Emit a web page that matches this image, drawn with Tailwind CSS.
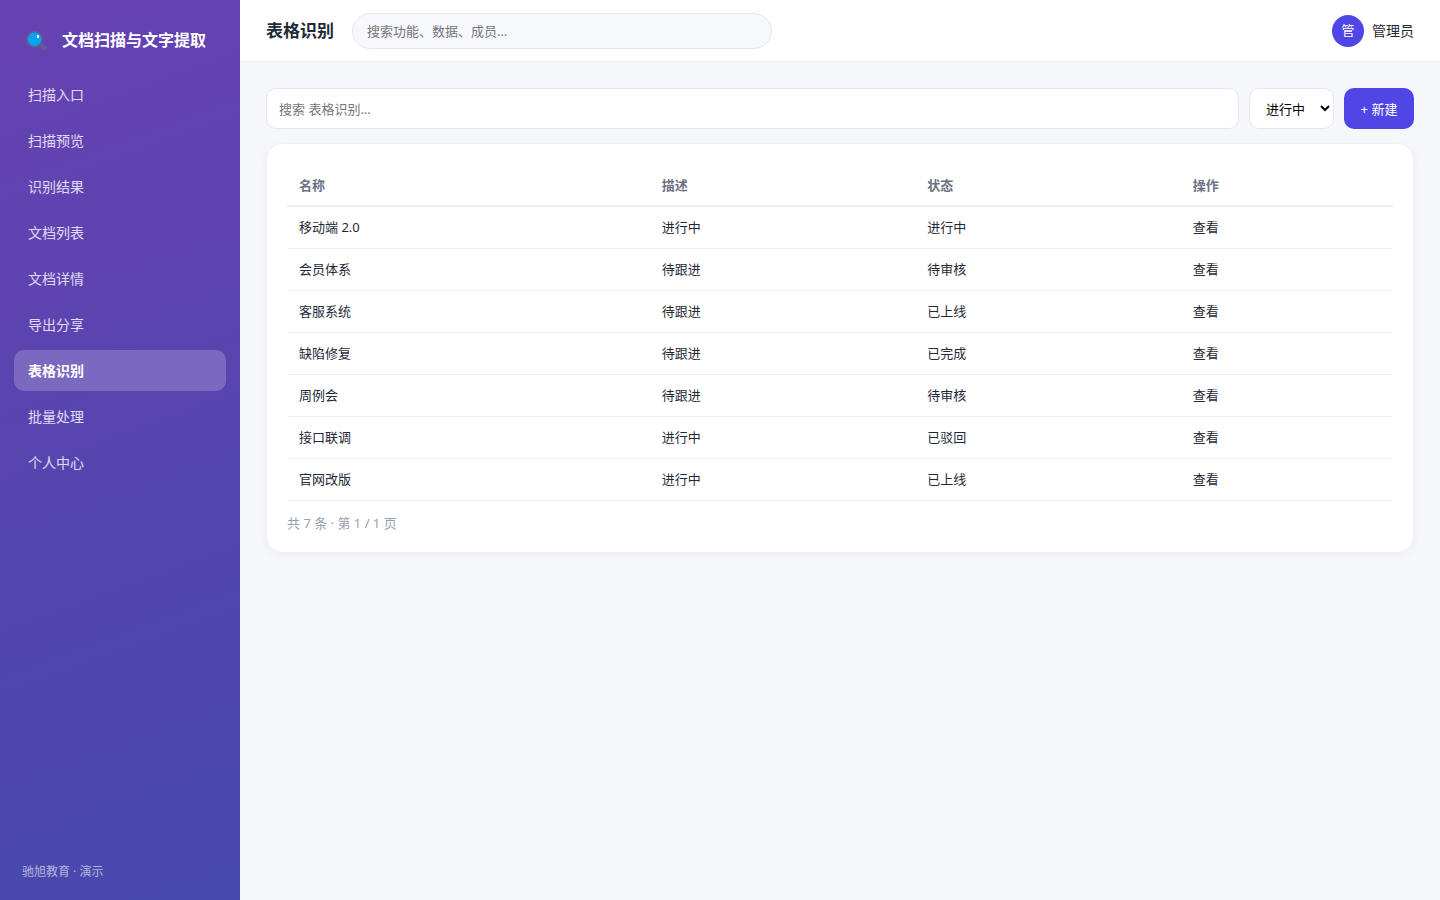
<!DOCTYPE html>
<html lang="zh-CN">
  <head>
    <meta charset="UTF-8" />
    <meta name="viewport" content="width=device-width, initial-scale=1.0" />
    <title>表格识别</title>
    <script src="https://cdn.jsdelivr.net/npm/@tailwindcss/browser@4"></script>
  </head>

  <body
    class="flex min-h-screen bg-[#f5f7fb] font-['Noto_Sans','Noto_Sans_CJK_SC',sans-serif] text-[13px] leading-5 text-[#1f2937]"
  >
    <!-- Sidebar -->
    <aside
      class="flex w-60 shrink-0 flex-col bg-linear-[160deg,#6741b2,#4749ac] text-white"
    >
      <div class="flex h-[75px] items-center gap-3 pt-1 pl-[26px] text-base font-semibold">
        <svg class="size-6" viewBox="0 0 24 24" aria-hidden="true">
          <path d="M14.5 16.5l5.4 5" stroke="#635994" stroke-width="4.8" />
          <circle cx="8.6" cy="11.2" r="7.7" fill="#00a4ef" stroke="#635994" stroke-width="1.8" />
          <rect x="11" y="7" width="2" height="3" fill="#fff" />
        </svg>
        <span class="whitespace-nowrap">文档扫描与文字提取</span>
      </div>
      <nav class="-mt-px flex flex-col gap-[5px] px-3.5 text-sm text-white/80">
        <a href="#" class="flex h-[41px] items-center rounded-[10px] px-3.5 hover:bg-white/10">扫描入口</a>
        <a href="#" class="flex h-[41px] items-center rounded-[10px] px-3.5 hover:bg-white/10">扫描预览</a>
        <a href="#" class="flex h-[41px] items-center rounded-[10px] px-3.5 hover:bg-white/10">识别结果</a>
        <a href="#" class="flex h-[41px] items-center rounded-[10px] px-3.5 hover:bg-white/10">文档列表</a>
        <a href="#" class="flex h-[41px] items-center rounded-[10px] px-3.5 hover:bg-white/10">文档详情</a>
        <a href="#" class="flex h-[41px] items-center rounded-[10px] px-3.5 hover:bg-white/10">导出分享</a>
        <a href="#" aria-current="page" class="flex h-[41px] items-center rounded-[10px] bg-white/20 px-3.5 font-semibold text-white">表格识别</a>
        <a href="#" class="flex h-[41px] items-center rounded-[10px] px-3.5 hover:bg-white/10">批量处理</a>
        <a href="#" class="flex h-[41px] items-center rounded-[10px] px-3.5 hover:bg-white/10">个人中心</a>
      </nav>
      <p class="mt-auto px-[22px] pb-[18px] text-xs leading-5 text-white/60">驰旭教育 · 演示</p>
    </aside>

    <div class="flex min-w-0 flex-1 flex-col">
      <!-- Top bar -->
      <header
        class="flex h-[62px] items-center gap-[18px] border-b border-[#eef0f4] bg-white px-[26px]"
      >
        <h1 class="text-[17px] leading-6 font-bold whitespace-nowrap">表格识别</h1>
        <input
          type="search"
          aria-label="全局搜索"
          class="h-9 w-full max-w-[420px] rounded-full border border-[#e5e7f0] bg-[#f7f8fc] px-3.5 placeholder:text-[#757575] focus:outline-none"
          placeholder="搜索功能、数据、成员…"
        />
        <div class="ml-auto flex items-center gap-2 text-sm whitespace-nowrap">
          <span class="flex size-8 items-center justify-center rounded-full bg-[#4f46e5] text-[13px] text-white">管</span>
          <span>管理员</span>
        </div>
      </header>

      <main class="p-[26px]">
        <div class="flex gap-2.5">
          <input
            type="search"
            aria-label="搜索表格识别"
            class="h-[41px] min-w-0 flex-1 rounded-[10px] border border-[#e5e7f0] bg-white px-3 placeholder:text-[#757575] focus:outline-none"
            placeholder="搜索 表格识别..."
          />
          <select
            aria-label="状态"
            class="h-[41px] w-[85px] rounded-[10px] border border-[#e5e7f0] bg-white pl-3 text-black"
          >
            <option>进行中</option>
            <option>待审核</option>
            <option>已上线</option>
            <option>已完成</option>
            <option>已驳回</option>
          </select>
          <button
            type="button"
            class="h-[41px] w-[70px] rounded-[10px] bg-[#4f46e5] text-white hover:bg-[#4338ca]"
          >
            + 新建
          </button>
        </div>

        <section
          class="mt-3.5 rounded-2xl border border-[#eef0f5] bg-white px-5 pt-5 pb-[19px] shadow-[0_2px_8px_rgba(30,30,70,0.04)]"
        >
          <table class="w-full table-fixed border-collapse text-left">
            <thead>
              <tr class="h-[42px] border-b-2 border-[#eef0f4] text-gray-500">
                <th class="w-[32.8%] px-3 font-semibold">名称</th>
                <th class="w-[24%] px-3 font-semibold">描述</th>
                <th class="w-[24%] px-3 font-semibold">状态</th>
                <th class="px-3 font-semibold">操作</th>
              </tr>
            </thead>
            <tbody>
              <tr class="h-[42px] border-b border-[#eef0f4]">
                <td class="px-3">移动端 2.0</td>
                <td class="px-3">进行中</td>
                <td class="px-3">进行中</td>
                <td class="px-3"><a href="#">查看</a></td>
              </tr>
              <tr class="h-[42px] border-b border-[#eef0f4]">
                <td class="px-3">会员体系</td>
                <td class="px-3">待跟进</td>
                <td class="px-3">待审核</td>
                <td class="px-3"><a href="#">查看</a></td>
              </tr>
              <tr class="h-[42px] border-b border-[#eef0f4]">
                <td class="px-3">客服系统</td>
                <td class="px-3">待跟进</td>
                <td class="px-3">已上线</td>
                <td class="px-3"><a href="#">查看</a></td>
              </tr>
              <tr class="h-[42px] border-b border-[#eef0f4]">
                <td class="px-3">缺陷修复</td>
                <td class="px-3">待跟进</td>
                <td class="px-3">已完成</td>
                <td class="px-3"><a href="#">查看</a></td>
              </tr>
              <tr class="h-[42px] border-b border-[#eef0f4]">
                <td class="px-3">周例会</td>
                <td class="px-3">待跟进</td>
                <td class="px-3">待审核</td>
                <td class="px-3"><a href="#">查看</a></td>
              </tr>
              <tr class="h-[42px] border-b border-[#eef0f4]">
                <td class="px-3">接口联调</td>
                <td class="px-3">进行中</td>
                <td class="px-3">已驳回</td>
                <td class="px-3"><a href="#">查看</a></td>
              </tr>
              <tr class="h-[42px] border-b border-[#eef0f4]">
                <td class="px-3">官网改版</td>
                <td class="px-3">进行中</td>
                <td class="px-3">已上线</td>
                <td class="px-3"><a href="#">查看</a></td>
              </tr>
            </tbody>
          </table>
          <p class="mt-3 text-gray-400">共 7 条 · 第 1 / 1 页</p>
        </section>
      </main>
    </div>
  </body>
</html>
